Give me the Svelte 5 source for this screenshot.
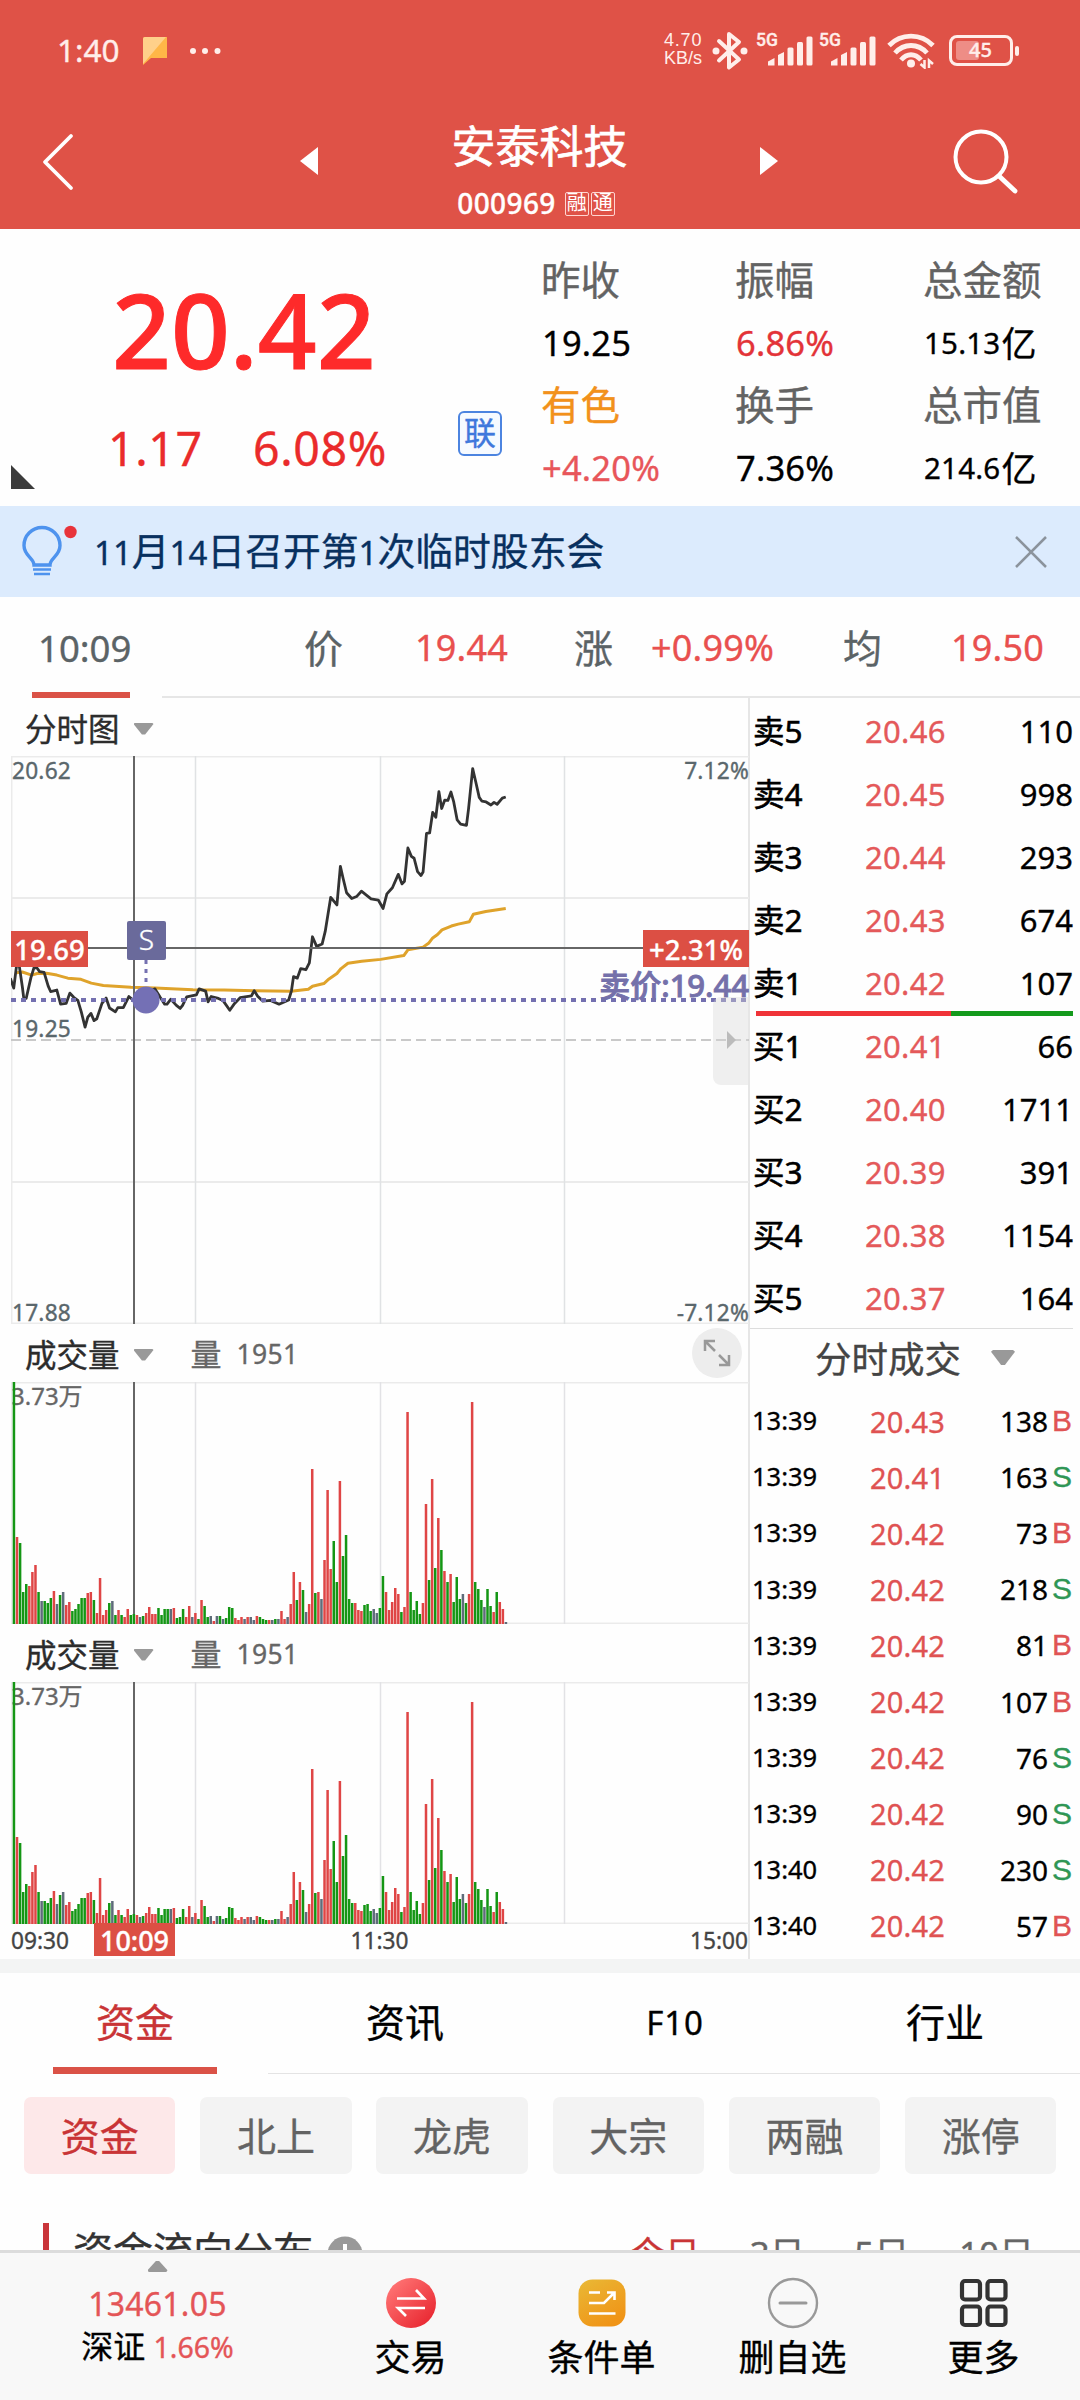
<script lang="ts">
    type Level = { label: string; price: string; volume: string };
    type Trade = { time: string; price: string; volume: string; side: 'B' | 'S' };

    const sells: Level[] = [
        { label: '卖5', price: '20.46', volume: '110' },
        { label: '卖4', price: '20.45', volume: '998' },
        { label: '卖3', price: '20.44', volume: '293' },
        { label: '卖2', price: '20.43', volume: '674' },
        { label: '卖1', price: '20.42', volume: '107' },
    ];

    const buys: Level[] = [
        { label: '买1', price: '20.41', volume: '66' },
        { label: '买2', price: '20.40', volume: '1711' },
        { label: '买3', price: '20.39', volume: '391' },
        { label: '买4', price: '20.38', volume: '1154' },
        { label: '买5', price: '20.37', volume: '164' },
    ];

    const trades: Trade[] = [
        { time: '13:39', price: '20.43', volume: '138', side: 'B' },
        { time: '13:39', price: '20.41', volume: '163', side: 'S' },
        { time: '13:39', price: '20.42', volume: '73', side: 'B' },
        { time: '13:39', price: '20.42', volume: '218', side: 'S' },
        { time: '13:39', price: '20.42', volume: '81', side: 'B' },
        { time: '13:39', price: '20.42', volume: '107', side: 'B' },
        { time: '13:39', price: '20.42', volume: '76', side: 'S' },
        { time: '13:39', price: '20.42', volume: '90', side: 'S' },
        { time: '13:40', price: '20.42', volume: '230', side: 'S' },
        { time: '13:40', price: '20.42', volume: '57', side: 'B' },
    ];

    // one bar per minute: g = down, r = up, s = flat
    const volumeData =
        'g242 r87 g81 g32 g40 r38 r52 r59 g32 s23 g23 g21 g26 r33 s20 g29 s32 r19 r22 g13 ' +
        'g15 g20 g26 g26 r31 r32 g24 r11 r46 r9 r14 g21 s23 g9 r14 g9 r7 r15 g9 g10 ' +
        'r9 s7 g8 r11 r17 r10 r10 g16 g9 g15 g15 s15 r16 g6 g7 g15 r7 r18 s7 r11 ' +
        'g5 r24 g18 g7 s8 r3 s8 g8 s5 g6 g17 g16 r6 r4 r7 s5 r7 s7 s4 r8 ' +
        'g7 g5 g4 r4 s4 g5 s5 r13 r5 s7 r20 r52 g24 r42 g34 s12 r20 r155 g31 r32 ' +
        's25 r64 r134 r55 g83 g42 r143 g68 g89 g25 g21 r21 r14 r13 g19 g20 g13 s15 s11 g16 ' +
        'g48 r32 r14 r22 r36 r30 g12 r17 r212 g32 g14 g23 g10 r21 r120 g44 r145 g56 r106 g74 ' +
        'r53 g42 r50 g22 g47 g25 s30 g21 r30 r222 g42 g35 g24 s17 g35 g18 r12 g32 r22 r15 s2';

    const barColors: Record<string, string> = { g: '#149614', r: '#df4545', s: '#5f6c7a' };
    const bars = volumeData.split(' ').map((d, i) => ({
        x: 1.7 + i * 3.075,
        h: Number(d.slice(1)),
        fill: barColors[d[0]],
    }));

    const priceLine =
        '30,622 40,648 48,590 56,590 65,645 69,674 76,675 90,620 99,594 108,596 115,605 128,607 140,643 147,657 165,653 ' +
        '176,690 192,688 203,661 214,672 226,680 236,710 247,750 255,724 264,714 273,733 281,728 296,688 308,674 318,700 ' +
        '335,710 342,699 358,699 374,670 385,678 400,690 425,660 450,650 465,672 478,690 485,690 496,677 512,693 523,701 ' +
        '530,693 542,671 570,666 578,650 597,656 604,684 613,670 634,675 647,680 667,706 681,688 697,673 730,668 738,655 ' +
        '748,669 763,682 785,680 810,690 838,679 846,655 852,618 863,622 873,597 888,600 898,582 907,514 919,539 935,533 ' +
        '944,500 960,411 978,431 988,330 996,362 1006,399 1021,414 1035,409 1049,395 1077,415 1098,418 1112,440 1123,402 ' +
        '1139,386 1156,351 1167,376 1174,369 1184,282 1194,304 1202,309 1212,344 1222,354 1228,345 1238,244 1247,243 ' +
        '1256,189 1265,202 1274,135 1282,179 1291,157 1300,158 1309,136 1317,162 1327,209 1337,220 1354,223 1360,180 ' +
        '1372,75 1381,110 1391,150 1399,160 1411,162 1425,170 1434,163 1443,168 1458,152 1468,149';

    const averageLine =
        '48,608 65,606 92,614 108,610 135,609 165,614 197,622 235,625 265,635 300,641 380,646 450,648 560,652 650,653 ' +
        '740,655 845,656 895,651 907,643 940,636 955,624 978,610 990,597 1010,583 1050,578 1105,573 1172,563 1184,548 ' +
        '1228,541 1245,530 1256,517 1270,508 1283,496 1310,486 1330,481 1362,475 1374,455 1410,448 1468,440';

    const chips = ['资金', '北上', '龙虎', '大宗', '两融', '涨停'];
    const tabs = ['资金', '资讯', 'F10', '行业'];

    let activeTab = $state('资金');
    let activeChip = $state('资金');
</script>

{#snippet signal()}
    <span class="signal">
        <b>5G</b>
        <svg width="45" height="30" viewBox="0 0 45 30" fill="#ffeeea">
            <path d="M0 29.500V25.500L6.500 22V29.500Z" />
            <path d="M10 29.500V19L16 16V29.500Z" />
            <rect x="19.500" y="11.500" width="6" height="18" rx="1.500" />
            <rect x="29" y="6" width="6" height="23.500" rx="1.500" />
            <rect x="38.500" y="0.500" width="6" height="29" rx="1.500" />
        </svg>
    </span>
{/snippet}

{#snippet levelRow(level: Level)}
    <div class="level">
        <span class="level-label">{level.label}</span>
        <span class="level-price">{level.price}</span>
        <span class="level-volume">{level.volume}</span>
    </div>
{/snippet}

{#snippet volumeChart(expandable: boolean)}
    <div class="panel-head">
        <span>成交量</span>
        <i class="caret"></i>
        <span class="measure">量</span>
        <span class="measure-value">1951</span>
        {#if expandable}
            <button class="expand" aria-label="expand">
                <svg width="50" height="50" viewBox="0 0 50 50" fill="none" stroke="#999" stroke-width="2.500">
                    <path d="M13 23V13H23M13 13L23 23M37 27V37H27M37 37L27 27" />
                </svg>
            </button>
        {/if}
    </div>
    <div class="volume">
        <span class="volume-max">3.73万</span>
        <svg width="738" height="242" viewBox="0 0 738 242">
            <path d="M0 .5H738M0 241.500H738M.5 0V242" stroke="#ebebeb" stroke-width="2" />
            <path d="M184.500 0V242M369.500 0V242M553.500 0V242" stroke="#e2e2e5" stroke-width="1.500" />
            <path d="M123 0V242" stroke="#666" stroke-width="2" />
            {#each bars as bar}
                <rect x={bar.x} y={242 - bar.h} width="2.500" height={bar.h} fill={bar.fill} />
            {/each}
        </svg>
    </div>
{/snippet}

<div class="screen">
    <header>
        <div class="status">
            <span class="clock">1:40</span>
            <svg class="flag" width="26" height="28" viewBox="0 0 26 28">
                <path d="M3 0H25V21H9L1 28V2Q1 0 3 0Z" fill="#ffb647" />
                <path d="M3 0H24L1 27V2Q1 0 3 0Z" fill="#ffd08a" />
            </svg>
            <svg class="dots" width="32" height="8" viewBox="0 0 32 8" fill="#ffeeea">
                <circle cx="4" cy="4" r="3" /><circle cx="16" cy="4" r="3" /><circle cx="28.500" cy="4" r="3" />
            </svg>
            <div class="speed"><span>4.70</span><span>KB/s</span></div>
            <svg class="bluetooth" width="36" height="40" viewBox="0 0 36 40">
                <path d="M7 10L27 28.500L17 36.500V3L27 11L7 29.500" fill="none" stroke="#ffeeea" stroke-width="4" stroke-linejoin="round" stroke-linecap="round" />
                <circle cx="4" cy="20" r="3.500" fill="#ffeeea" /><circle cx="32" cy="20" r="3.500" fill="#ffeeea" />
            </svg>
            {@render signal()}
            {@render signal()}
            <svg class="wifi" width="48" height="36" viewBox="0 0 48 36" fill="none" stroke="#ffeeea" stroke-width="4.800">
                <path d="M2 12.500C14 0 34 0 46 12.500M8 20C17 10 31 10 40 20M14 27C20 20 28 20 34 27" />
                <circle cx="24" cy="30.500" r="4" fill="#ffeeea" stroke="none" />
                <path d="M37.500 27V34.500L33.500 31M42 35V27.500L46 31" stroke-width="2.500" />
            </svg>
            <span class="battery"><i></i><b>45</b></span>
        </div>
        <nav class="title-bar">
            <svg class="back" width="32" height="58" viewBox="0 0 32 58" fill="none" stroke="#fff" stroke-width="3.800" stroke-linecap="round" stroke-linejoin="round">
                <path d="M29 3L3 29L29 55" />
            </svg>
            <svg class="prev" width="20" height="30" viewBox="0 0 20 30" fill="#fff"><path d="M19 1V29L1 15Z" /></svg>
            <div class="stock">
                <h1>安泰科技</h1>
                <div class="code"><span>000969</span><em>融</em><em>通</em></div>
            </div>
            <svg class="next" width="20" height="30" viewBox="0 0 20 30" fill="#fff"><path d="M1 1V29L19 15Z" /></svg>
            <svg class="search" width="66" height="66" viewBox="0 0 66 66" fill="none" stroke="#fff" stroke-linecap="round">
                <circle cx="28" cy="28" r="25.500" stroke-width="4" />
                <path d="M46 47L62 62" stroke-width="4.800" />
            </svg>
        </nav>
    </header>

    <section class="quote">
        <div class="last">
            <div class="last-price">20.42</div>
            <div class="change"><span>1.17</span><span>6.08%</span></div>
            <i class="corner"></i>
            <span class="link-badge">联</span>
        </div>
        <dl class="stats">
            <div><dt>昨收</dt><dd>19.25</dd></div>
            <div><dt>振幅</dt><dd class="up">6.86%</dd></div>
            <div><dt>总金额</dt><dd class="small">15.13<i>亿</i></dd></div>
            <div><dt class="sector">有色</dt><dd class="up soft">+4.20%</dd></div>
            <div><dt>换手</dt><dd>7.36%</dd></div>
            <div><dt>总市值</dt><dd class="small">214.6<i>亿</i></dd></div>
        </dl>
    </section>

    <div class="notice">
        <svg width="58" height="56" viewBox="0 0 58 56" fill="none">
            <path d="M15 41C15 34 5 32 5 21.500A18 18 0 0 1 41 21.500C41 32 31 34 31 41Z" stroke="#4e93ee" stroke-width="3.400" />
            <path d="M14 45.500H32M15 50H31" stroke="#4e93ee" stroke-width="2.500" />
            <circle cx="51.500" cy="8" r="6.200" fill="#e8333a" />
        </svg>
        <p><b>11</b>月<b>14</b>日召开第<b>1</b>次临时股东会</p>
        <svg class="close" width="32" height="32" viewBox="0 0 32 32" stroke="#8b939c" stroke-width="2.500">
            <path d="M1 1L31 31M31 1L1 31" />
        </svg>
    </div>

    <div class="cursor-bar">
        <span class="cursor-time">10:09</span>
        <span class="c-label">价</span><span class="c-value">19.44</span>
        <span class="c-label">涨</span><span class="c-value">+0.99%</span>
        <span class="c-label">均</span><span class="c-value">19.50</span>
    </div>

    <main>
        <div class="charts">
            <div class="panel-head first">
                <span>分时图</span>
                <i class="caret"></i>
            </div>
            <div class="minute">
                <svg width="738" height="568" viewBox="0 0 738 568">
                    <path d="M0 .5H738M0 142H738M0 426H738M0 567.500H738M.5 0V568" stroke="#ebebeb" stroke-width="2" />
                    <path d="M184.500 0V568M369.500 0V568M553.500 0V568" stroke="#e0e2e4" stroke-width="1.500" />
                    <path d="M0 284H738" stroke="#c9c9c9" stroke-width="2" stroke-dasharray="10 5" />
                    <svg width="738" height="568" viewBox="32 42 2142 1483" preserveAspectRatio="none" fill="none" stroke-linejoin="round" overflow="visible">
                        <polyline points={averageLine} stroke="#dfa32b" stroke-width="3" vector-effect="non-scaling-stroke" />
                        <polyline points={priceLine} stroke="#333" stroke-width="2.800" vector-effect="non-scaling-stroke" />
                    </svg>
                    <path d="M0 244H738" stroke="#7470b0" stroke-width="4" stroke-dasharray="5 5" />
                    <path d="M0 192H738M123 0V568" stroke="#666" stroke-width="2" />
                    <path d="M135 204V232" stroke="#7470b0" stroke-width="3" stroke-dasharray="4 5" />
                    <circle cx="135" cy="244" r="13.500" fill="#7470b5" />
                </svg>
                <span class="axis top left">20.62</span>
                <span class="axis top right">7.12%</span>
                <span class="axis mid left">19.25</span>
                <span class="axis bottom left">17.88</span>
                <span class="axis bottom right">-7.12%</span>
                <span class="tag tag-price">19.69</span>
                <span class="tag tag-percent">+2.31%</span>
                <span class="marker">S</span>
                <span class="sell-price">卖价:19.44</span>
                <span class="drawer"><i></i></span>
            </div>
            {@render volumeChart(true)}
            {@render volumeChart(false)}
            <div class="times">
                <span>09:30</span><span>11:30</span><span>15:00</span>
                <b>10:09</b>
            </div>
        </div>

        <aside>
            <div class="book">
                {#each sells as level}
                    {@render levelRow(level)}
                {/each}
                <div class="ratio"><i></i></div>
                {#each buys as level}
                    {@render levelRow(level)}
                {/each}
            </div>
            <div class="trades-head">分时成交<i class="caret big"></i></div>
            {#each trades as trade}
                <div class="trade">
                    <span class="trade-time">{trade.time}</span>
                    <span class="trade-price">{trade.price}</span>
                    <span class="trade-volume">{trade.volume}</span>
                    <span class="side" class:sell={trade.side === 'S'}>{trade.side}</span>
                </div>
            {/each}
        </aside>
    </main>

    <div class="tabs" role="tablist">
        {#each tabs as tab (tab)}
            <button role="tab" aria-selected={tab === activeTab} class:active={tab === activeTab} onclick={() => (activeTab = tab)}>{tab}</button>
        {/each}
    </div>

    <div class="chips">
        {#each chips as chip (chip)}
            <button class:active={chip === activeChip} onclick={() => (activeChip = chip)}>{chip}</button>
        {/each}
    </div>

    <div class="flow-head">
        <h2>资金流向分布</h2>
        <svg width="36" height="36" viewBox="0 0 36 36">
            <circle cx="18" cy="18" r="17.500" fill="#999" />
            <path d="M18 8V28" stroke="#fff" stroke-width="4" />
        </svg>
        <div class="periods">
            <span class="active">今日</span><span>3日</span><span>5日</span><span>10日</span>
        </div>
    </div>

    <footer>
        <div class="index">
            <i class="up-caret"></i>
            <div class="index-value">13461.05</div>
            <div class="index-name">深证 <b>1.66%</b></div>
        </div>
        <button>
            <svg width="52" height="52" viewBox="0 0 52 52" fill="none" stroke="#fff" stroke-width="2.600">
                <defs>
                    <linearGradient id="trade-fill" x1="0" y1="0" x2="1" y2="1"><stop offset=".1" stop-color="#ff7474" /><stop offset=".85" stop-color="#ea2c35" /></linearGradient>
                </defs>
                <circle cx="26" cy="26" r="25" fill="url(#trade-fill)" stroke="none" />
                <path d="M12 21.500H39L31 13M40 31H13L21 39" />
            </svg>
            交易
        </button>
        <button>
            <svg width="52" height="52" viewBox="0 0 52 52" fill="none" stroke="#fff" stroke-width="2.600">
                <defs>
                    <linearGradient id="order-fill" x1="0" y1="0" x2=".6" y2="1"><stop offset="0" stop-color="#e9b936" /><stop offset="1" stop-color="#f09417" /></linearGradient>
                </defs>
                <rect x="2.500" y="2.500" width="47" height="47" rx="14" fill="url(#order-fill)" stroke="none" />
                <path d="M13 15.500H24M13 26H28L38 16M31 15.500H38.500V23M13 36.500H39.500" />
            </svg>
            条件单
        </button>
        <button>
            <svg width="52" height="52" viewBox="0 0 52 52" fill="none" stroke="#999" stroke-width="2.400">
                <circle cx="26" cy="26" r="24" />
                <path d="M13 26H39" stroke-width="3" stroke-linecap="round" />
            </svg>
            删自选
        </button>
        <button>
            <svg width="52" height="52" viewBox="0 0 52 52" fill="none" stroke="#333" stroke-width="4.200">
                <rect x="4" y="4" width="18" height="18.500" rx="3" />
                <rect x="29.500" y="4" width="18" height="18.500" rx="3" />
                <rect x="4" y="29.500" width="18" height="18.500" rx="3" />
                <rect x="29.500" y="29.500" width="18" height="18.500" rx="3" />
            </svg>
            更多
        </button>
    </footer>
</div>

<style>
    .screen {
        display: flex;
        flex-direction: column;
        width: 1080px;
        height: 2400px;
        overflow: hidden;
        background: #fefefe;
        color: #000;
        font-family: 'Noto Sans', 'Noto Sans CJK SC', sans-serif;
        line-height: 1;
        -webkit-text-stroke-width: 0.35px;
    }

    i, em { font-style: normal; }

    button {
        padding: 0;
        border: none;
        background: none;
        color: inherit;
        font: inherit;
        cursor: pointer;
    }

    header {
        height: 229px;
        flex-shrink: 0;
        background: #df5247;
        color: #fff;
    }

    .status {
        display: flex;
        align-items: center;
        height: 101px;
        padding-left: 57px;
        box-sizing: border-box;
        color: #ffeeea;
    }
    .clock { width: 85px; margin-top: -2px; font-size: 31.5px; }
    .dots { margin-left: 21px; }
    .speed {
        display: flex;
        flex-direction: column;
        width: 56px;
        margin: -4px 0 0 443px;
        font-family: 'Liberation Sans', sans-serif;
        font-size: 18px;
        line-height: 18px;
        -webkit-text-stroke-width: 0;
    }
    .speed span:first-child { letter-spacing: 0.8px; }
    .bluetooth { margin-left: -8px; }
    .signal {
        display: flex;
        position: relative;
        width: 45px;
        margin-left: 20px;
    }
    .signal + .signal { margin-left: 18px; }
    .signal b {
        position: absolute;
        left: -12px;
        top: -4px;
        font-family: Roboto, sans-serif;
        font-size: 17.5px;
        font-weight: 500;
    }
    .wifi { margin-left: 11px; }
    .battery {
        display: flex;
        align-items: center;
        position: relative;
        width: 64px;
        height: 31px;
        margin-left: 14px;
        box-sizing: border-box;
        border: 3px solid #ffeeea;
        border-radius: 8px;
    }
    .battery i {
        width: 23px;
        height: 19px;
        margin-left: 4px;
        border-radius: 3px;
        background: #ee8d86;
    }
    .battery b {
        position: absolute;
        left: 17px;
        top: 2px;
        font-size: 20px;
        font-weight: 500;
    }
    .battery::after {
        content: '';
        position: absolute;
        right: -9px;
        top: 8px;
        width: 4px;
        height: 10px;
        border-radius: 2px;
        background: #ffeeea;
    }

    .title-bar {
        display: flex;
        align-items: flex-start;
        height: 128px;
        padding-left: 42px;
    }
    .back { margin-top: 32px; }
    .prev { margin: 45px 0 0 225px; }
    .stock { width: 440px; padding-top: 24px; text-align: center; }
    h1 { margin: 0 -1px 0 0; font-size: 44px; font-weight: 400; line-height: 43px; -webkit-text-stroke-width: 0.7px; }
    .code {
        display: flex;
        justify-content: center;
        align-items: center;
        height: 26px;
        margin-top: 22px;
        padding-right: 6px;
        font-size: 29px;
    }
    .code span { margin-right: 7px; font-size: 28px; font-weight: 500; letter-spacing: 0.4px; }
    .code em {
        width: 24px;
        height: 24px;
        margin: 1px 0 0 2px;
        box-sizing: border-box;
        border: 1px solid #ffd5d0;
        border-radius: 2px;
        font-size: 20px;
        line-height: 20px;
        text-align: center;
        -webkit-text-stroke-width: 0;
    }
    .next { margin-top: 45px; }
    .search { margin: 28px 0 0 174px; }

    .quote { display: flex; height: 277px; flex-shrink: 0; }
    .last { position: relative; width: 541px; color: #ea2b2b; }
    .last-price {
        padding: 48px 0 0 112px;
        color: #fe2a2a;
        font-size: 103px;
        font-weight: 500;
        line-height: 104px;
        -webkit-text-stroke-width: 1px;
    }
    .change {
        display: flex;
        padding: 44px 0 0 108px;
        font-size: 46.5px;
        line-height: 47px;
        letter-spacing: 0.6px;
    }
    .change span:first-child { width: 145px; }
    .corner {
        position: absolute;
        left: 11px;
        top: 236px;
        border: 12.5px solid transparent;
        border-left-color: #3b3b3b;
        border-bottom-color: #3b3b3b;
    }
    .link-badge {
        position: absolute;
        left: 458px;
        top: 182px;
        width: 44px;
        height: 45px;
        box-sizing: border-box;
        border: 2px solid #4c84e0;
        border-radius: 6px;
        background: #f6faff;
        color: #3f78dc;
        font-size: 32px;
        line-height: 40px;
        text-align: center;
    }
    .stats {
        display: grid;
        grid-template-columns: 194px 188px auto;
        grid-auto-rows: 125px;
        margin: 0;
        padding-top: 31px;
    }
    dt { color: #636363; font-size: 39.5px; line-height: 40px; }
    dd { display: flex; align-items: center; height: 40px; margin: 23px 0 0 1px; font-size: 34.5px; letter-spacing: 0.2px; }
    dd.small { font-size: 29.5px; }
    dd.small i { margin-left: 1px; font-size: 35px; }
    .sector { color: #f2911b; }
    .up { color: #e33338; }
    .soft { color: #e8565a; }

    .notice {
        display: flex;
        align-items: center;
        height: 91px;
        flex-shrink: 0;
        padding-left: 19px;
        background: #dcebfd;
        color: #08305f;
    }
    .notice p { flex: 1; margin: 0 0 0 17px; font-size: 37.8px; line-height: 50px; }
    .notice b { font-size: 33px; font-weight: 400; }
    .close { margin-right: 33px; }

    .cursor-bar {
        display: grid;
        grid-template-columns: 252px 125px 145px 91px 178px 122px 129px;
        align-items: center;
        position: relative;
        height: 101px;
        flex-shrink: 0;
        padding-left: 38px;
        color: #5b6366;
        font-size: 36.5px;
        line-height: 96px;
        white-space: nowrap;
    }
    .cursor-bar::before {
        content: '';
        position: absolute;
        left: 32px;
        bottom: 0;
        width: 98px;
        height: 6px;
        background: #da5247;
    }
    .cursor-bar::after {
        content: '';
        position: absolute;
        left: 162px;
        right: 0;
        bottom: 0;
        height: 2px;
        background: #e6e6e6;
    }
    .c-label { padding-left: 14px; font-size: 39px; line-height: 92px; }
    .c-value { color: #e9504f; font-size: 36px; letter-spacing: 0.2px; }

    main { display: flex; height: 1261px; flex-shrink: 0; border-bottom: 14px solid #f3f4f4; }
    .charts { width: 737px; padding-left: 11px; border-right: 2px solid #e6e6e6; }

    .panel-head {
        display: flex;
        align-items: center;
        position: relative;
        height: 58px;
        padding: 3px 0 0 14px;
        box-sizing: border-box;
        color: #2c2c2c;
        font-size: 31.5px;
    }
    .caret {
        width: 20px;
        height: 12px;
        margin-left: 14px;
        background: #999;
        clip-path: polygon(8% 0, 92% 0, 100% 12%, 58% 100%, 42% 100%, 0 12%);
    }
    .caret.big { width: 24px; height: 15px; margin: -4px 0 0 30px; }
    .measure { margin-left: 37px; color: #666; font-size: 31px; }
    .measure-value { margin-left: 15px; color: #666; font-size: 26.5px; letter-spacing: 0.3px; }
    .expand {
        position: absolute;
        left: 681px;
        top: 4px;
        width: 50px;
        height: 50px;
        border-radius: 50%;
        background: #ededed;
    }

    .minute { position: relative; height: 568px; }
    .minute svg { display: block; }
    .axis { position: absolute; color: #5a676c; font-size: 22.7px; letter-spacing: 0.2px; }
    .top { top: 4px; }
    .mid { top: 262px; }
    .bottom { bottom: -1px; }
    .left { left: 1px; }
    .right { right: -1px; }
    .tag {
        position: absolute;
        box-sizing: border-box;
        background: #dc4f44;
        color: #fff;
        font-size: 27.5px;
        font-weight: 500;
        line-height: 38px;
        text-align: center;
    }
    .tag-price { left: 0; top: 175px; width: 77px; height: 36px; }
    .tag-percent { right: -1px; top: 174px; width: 106px; height: 37px; line-height: 40px; }
    .marker {
        position: absolute;
        left: 116px;
        top: 165px;
        width: 39px;
        height: 39px;
        border-radius: 2px;
        background: #6a6a9b;
        color: #fff;
        font-size: 28px;
        font-weight: 300;
        line-height: 37px;
        text-align: center;
    }
    .sell-price {
        position: absolute;
        right: -1px;
        top: 214px;
        color: #7470aa;
        font-size: 31px;
        font-weight: 500;
        -webkit-text-stroke-width: 0.9px;
    }
    .drawer {
        position: absolute;
        right: 0;
        top: 241px;
        width: 35px;
        height: 88px;
        border-radius: 8px 0 0 8px;
        background: rgba(215, 215, 215, 0.38);
    }
    .drawer i {
        position: absolute;
        left: 14px;
        top: 34px;
        border: 9px solid transparent;
        border-left-color: #bbb;
        border-right: none;
    }

    .volume { position: relative; height: 242px; }
    .volume svg { display: block; position: relative; }
    .volume-max { position: absolute; left: 0; top: 2px; color: #666; font-size: 24px; }

    .times {
        display: flex;
        justify-content: space-between;
        position: relative;
        padding: 5px 0 0;
        color: #444;
        font-size: 22.7px;
        line-height: 24px;
    }
    .times b {
        position: absolute;
        left: 83px;
        top: -1px;
        width: 81px;
        height: 33px;
        background: #dc4f44;
        color: #fff;
        font-size: 27px;
        font-weight: 500;
        line-height: 35px;
        text-align: center;
    }

    aside { flex: 1; }
    .book { height: 628px; padding: 2px 0 0 3px; margin-right: 7px; border-bottom: 1px solid #ddd; box-sizing: content-box; }
    .level {
        display: grid;
        grid-template-columns: 112px 90px 1fr;
        align-items: center;
        height: 63px;
        padding-bottom: 1px;
        box-sizing: border-box;
        font-size: 31px;
    }
    .level-label { font-size: 31.5px; -webkit-text-stroke-width: 0.6px; }
    .level-price { color: #e4595a; letter-spacing: 0.3px; }
    .level-volume { text-align: right; }
    .ratio { height: 5px; margin: -4px 0 -1px 3px; background: #149a1c; }
    .ratio i { display: block; width: 195px; height: 5px; background: #ef3338; }

    .trades-head {
        display: flex;
        align-items: center;
        height: 65px;
        padding: 0 0 4px 65px;
        box-sizing: border-box;
        color: #444;
        font-size: 36.5px;
    }
    .trade {
        display: grid;
        grid-template-columns: 118px 90px 88px 1fr;
        align-items: center;
        height: 56.1px;
        padding: 0 0 2px 2px;
        box-sizing: border-box;
        font-size: 28px;
    }
    .trade-time { font-size: 25.5px; }
    .trade-price { color: #df5252; font-size: 29px; letter-spacing: 0.2px; }
    .trade-volume { text-align: right; }
    .side { padding-left: 4px; color: #e05454; font-family: 'Liberation Sans', sans-serif; font-size: 30px; }
    .side.sell { color: #2f9655; }

    .tabs { display: flex; position: relative; height: 101px; flex-shrink: 0; }
    .tabs::after {
        content: '';
        position: absolute;
        left: 268px;
        right: 0;
        bottom: 0;
        height: 1px;
        background: #e4e4e4;
    }
    .tabs button { position: relative; width: 270px; padding-bottom: 4px; font-size: 39px; }
    .tabs button:nth-child(3) { padding-bottom: 2px; font-size: 33px; letter-spacing: 0.8px; }
    .tabs .active { color: #c93436; }
    .tabs .active::after {
        content: '';
        position: absolute;
        left: 53px;
        bottom: 0;
        width: 164px;
        height: 7px;
        background: #da5247;
    }

    .chips { display: flex; gap: 24.8px; padding: 23px 0 0 24px; flex-shrink: 0; }
    .chips button {
        width: 151.4px;
        height: 77px;
        border-radius: 7px;
        background: #f3f3f3;
        color: #636363;
        font-size: 39px;
        line-height: 74px;
    }
    .chips .active { background: #fde8e9; color: #c93436; }

    .flow-head {
        display: flex;
        align-items: center;
        height: 58px;
        margin: 49px 46px 0 43px;
        border-left: 6px solid #c9353a;
        flex-shrink: 0;
    }
    h2 { margin: -2px 14px 0 24px; color: #333; font-size: 40px; font-weight: 400; }
    .flow-head svg { margin-top: 4px; }
    .periods {
        display: flex;
        justify-content: space-between;
        width: 404px;
        margin: 3px 0 0 auto;
        color: #666;
        font-size: 35px;
    }
    .periods .active { color: #c93436; }

    footer {
        display: flex;
        position: relative;
        height: 147px;
        margin-top: -31px;
        flex-shrink: 0;
        border-top: 3px solid #dcdcdc;
        background: #f8f8f8;
    }
    .index { width: 315px; text-align: center; }
    .up-caret {
        display: block;
        width: 20px;
        height: 11px;
        margin: 8px auto 0;
        background: #999;
        clip-path: polygon(42% 0, 58% 0, 100% 85%, 94% 100%, 6% 100%, 0 85%);
    }
    .index-value { margin-top: 16px; color: #e45557; font-size: 32px; letter-spacing: 0.2px; }
    .index-name { margin-top: 6px; font-size: 32px; line-height: 40px; }
    .index-name b { color: #e45557; font-size: 28.5px; font-weight: 400; }
    footer button {
        display: flex;
        flex-direction: column;
        align-items: center;
        width: 191px;
        padding-top: 24px;
        font-size: 36px;
        line-height: 36px;
    }
    footer button svg { margin-bottom: 11px; }
</style>
